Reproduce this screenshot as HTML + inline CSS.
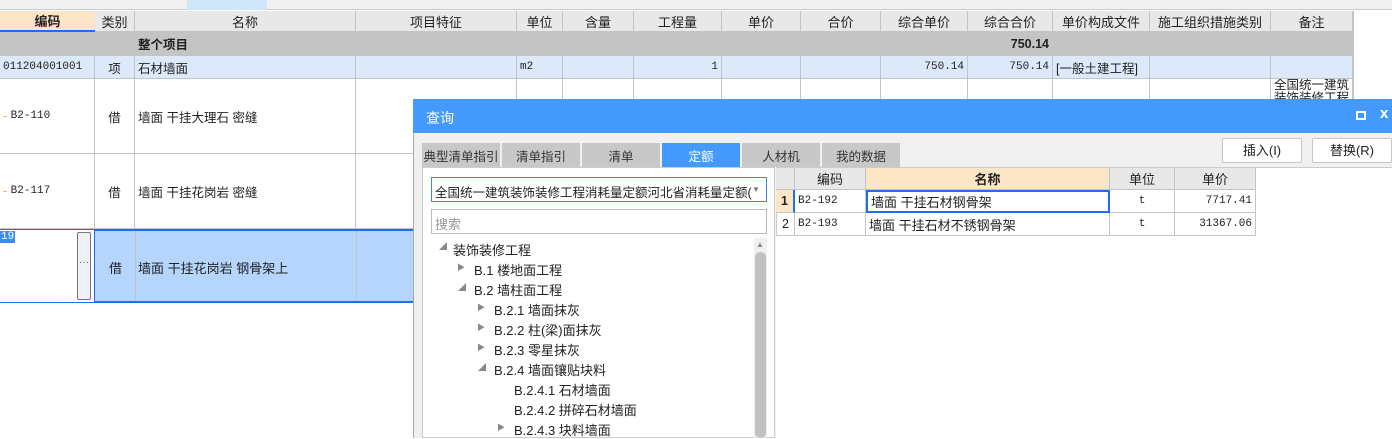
<!DOCTYPE html>
<html><head><meta charset="utf-8"><style>
*{box-sizing:border-box;margin:0;padding:0}
body{width:1392px;height:438px;overflow:hidden;background:#fff;position:relative;font-family:"Liberation Sans","Noto Sans CJK SC",sans-serif;font-size:12.5px;color:#222}
.a{position:absolute}
.c{position:absolute;border-right:1px solid #c4c4c4;border-bottom:1px solid #c4c4c4;display:flex;align-items:center;padding:0 3px;white-space:nowrap;overflow:hidden}
.h{background:#e8e8e8;justify-content:center;font-size:13px}
.g{background:#c4c4c4;font-weight:bold}
.l{background:#dce9fb}
.m{font-family:"Liberation Mono","Noto Sans CJK SC",monospace;font-size:11px}
.r{justify-content:flex-end}.ce{justify-content:center}
.tab{position:absolute;top:143px;height:24px;width:78px;background:#c8c8c8;display:flex;align-items:center;justify-content:center;font-size:12.5px;color:#333;white-space:nowrap;overflow:hidden}
.tr{position:absolute;font-size:12px;color:#222}
</style></head><body>
<div class="a" style="left:0;top:0;width:1392px;height:10px;background:#f0f0f0;border-bottom:1px solid #ccc"></div>
<div class="a" style="left:187px;top:0;width:80px;height:10px;background:#cfe6fb"></div>
<div id="grid"></div>
<script>
var cols=[0,95,135,356,517,563,634,722,801,881,968,1053,1150,1271,1353];
var rows=[11,32,56,79,154,229,303];
var hdr=["编码","类别","名称","项目特征","单位","含量","工程量","单价","合价","综合单价","综合合价","单价构成文件","施工组织措施类别","备注"];
var h='';
function cell(ci,ri,cls,txt){var x=cols[ci],w=cols[ci+1]-x,y=rows[ri],hh=rows[ri+1]-y;h+='<div class="c '+cls+'" style="left:'+x+'px;top:'+y+'px;width:'+w+'px;height:'+hh+'px">'+txt+'</div>';}
for(var i=0;i<14;i++)cell(i,0,'h',hdr[i]);
for(i=0;i<14;i++)cell(i,1,'g',i==2?'整个项目':(i==10?'<span style="margin-left:auto">750.14</span>':''));
var r2=['<span class="m">011204001001</span>','项','石材墙面','','<span class="m">m2</span>','','<span class="m" style="margin-left:auto">1</span>','','','<span class="m" style="margin-left:auto">750.14</span>','<span class="m" style="margin-left:auto">750.14</span>','[一般土建工程]','',''];
for(i=0;i<14;i++)cell(i,2,'l'+(i==1?' ce':''),r2[i]);
var d=[['B2-110','墙面 干挂大理石 密缝'],['B2-117','墙面 干挂花岗岩 密缝']];
for(var k=0;k<2;k++)for(i=0;i<14;i++){var t='';if(i==0)t='<span style="color:#f0b040">-</span>&nbsp;<span class="m">'+d[k][0]+'</span>';if(i==1)t='借';if(i==2)t=d[k][1];if(i==13&&k==0)t='<span style="white-space:normal;align-self:flex-start;line-height:13px">全国统一建筑装饰装修工程</span>';cell(i,3+k,i==1?'ce':'',t);}
for(i=0;i<14;i++){var t='';if(i==1)t='借';if(i==2)t='墙面 干挂花岗岩 钢骨架上';cell(i,5,i==0?'':'ce',t);}
document.getElementById('grid').innerHTML=h;
</script>
<div class="a" style="left:95px;top:229px;width:1297px;height:74px;background:#b5d5fd;border-top:2px solid #1e6ff0;border-bottom:2px solid #1e6ff0"></div>
<div class="a" style="left:135px;top:231px;width:1px;height:70px;background:#c4c4c4"></div>
<div class="a" style="left:356px;top:231px;width:1px;height:70px;background:#c4c4c4"></div>
<div class="a" style="left:109px;top:258px;font-size:13px">借</div>
<div class="a" style="left:138px;top:258px;font-size:13px">墙面 干挂花岗岩 钢骨架上</div>
<div class="a" style="left:0;top:229px;width:95px;height:74px;background:#fff;border:1px solid #1e6ff0;border-left:none"></div>
<div class="a m" style="left:0;top:231px;background:#3d8af5;color:#fff;padding:0 1px">19</div>
<div class="a" style="left:77px;top:232px;width:14px;height:68px;background:#eef1f8;border:1px solid #777;border-radius:2px;font-size:10px;text-align:center;line-height:60px;color:#555">···</div>
<div class="a" style="left:0;top:11px;width:95px;height:21px;background:#fde6c6;border-bottom:2px solid #1e6ff0;display:flex;align-items:center;justify-content:center;font-weight:bold;font-size:13px">编码</div>
<div class="a" style="left:1353px;top:11px;width:1px;height:427px;background:#c4c4c4"></div>

<div class="a" style="left:413px;top:99px;width:979px;height:339px;background:#f0f0f0;border-left:1px solid #aaa"></div>
<div class="a" style="left:413px;top:99px;width:979px;height:34px;background:#4499fd;color:#fff;font-size:14px;padding:9px 0 0 13px">查询</div>
<div class="a" style="left:1356px;top:111px;width:10px;height:9px;border:2px solid #fff"></div>
<div class="a" style="left:1380px;top:105px;color:#fff;font-size:15px;font-weight:bold">x</div>
<div class="tab" style="left:422px">典型清单指引</div>
<div class="tab" style="left:502px">清单指引</div>
<div class="tab" style="left:582px">清单</div>
<div class="tab" style="left:662px;background:#4499fd;color:#fff">定额</div>
<div class="tab" style="left:742px">人材机</div>
<div class="tab" style="left:822px">我的数据</div>
<div class="a" style="left:1222px;top:138px;width:80px;height:25px;background:#fff;border:1px solid #c8c8c8;border-radius:2px;font-size:13px;text-align:center;line-height:23px">插入(I)</div>
<div class="a" style="left:1312px;top:138px;width:80px;height:25px;background:#fff;border:1px solid #c8c8c8;border-radius:2px;font-size:13px;text-align:center;line-height:23px">替换(R)</div>
<div class="a" style="left:422px;top:167px;width:353px;height:271px;background:#fff;border:1px solid #ccc"></div>
<div class="a" style="left:431px;top:177px;width:336px;height:25px;background:#fff;border:1px solid #3d8af5;font-size:12.5px;padding:4px 0 0 3px;white-space:nowrap;overflow:hidden">全国统一建筑装饰装修工程消耗量定额河北省消耗量定额(20</div>
<div class="a" style="left:752px;top:179px;width:14px;height:21px;background:#fff;color:#777;font-size:8px;padding-top:6px">▼</div>
<div class="a" style="left:431px;top:209px;width:336px;height:25px;background:#fff;border:1px solid #bbb;font-size:13px;color:#999;padding:4px 0 0 3px">搜索</div>
<div class="a" style="left:754px;top:238px;width:13px;height:200px;background:#f0f0f0"></div>
<div class="a" style="left:755px;top:252px;width:11px;height:186px;background:#c2c2c2;border-radius:5px"></div>
<div class="a" style="left:756px;top:240px;color:#888;font-size:8px">▲</div>
<div class="tr" style="left:439px;top:241px;color:#888;font-size:8px">◢</div><div class="tr" style="left:453px;top:240px;font-size:13px">装饰装修工程</div>
<div class="tr" style="left:457px;top:262px;color:#888;font-size:8px">▶</div><div class="tr" style="left:474px;top:260px;font-size:13px">B.1 楼地面工程</div>
<div class="tr" style="left:458px;top:282px;color:#888;font-size:8px">◢</div><div class="tr" style="left:474px;top:280px;font-size:13px">B.2 墙柱面工程</div>
<div class="tr" style="left:477px;top:302px;color:#888;font-size:8px">▶</div><div class="tr" style="left:494px;top:300px;font-size:13px">B.2.1 墙面抹灰</div>
<div class="tr" style="left:477px;top:322px;color:#888;font-size:8px">▶</div><div class="tr" style="left:494px;top:320px;font-size:13px">B.2.2 柱(梁)面抹灰</div>
<div class="tr" style="left:477px;top:342px;color:#888;font-size:8px">▶</div><div class="tr" style="left:494px;top:340px;font-size:13px">B.2.3 零星抹灰</div>
<div class="tr" style="left:478px;top:362px;color:#888;font-size:8px">◢</div><div class="tr" style="left:494px;top:360px;font-size:13px">B.2.4 墙面镶贴块料</div>
<div class="tr" style="left:514px;top:380px;font-size:13px">B.2.4.1 石材墙面</div>
<div class="tr" style="left:514px;top:400px;font-size:13px">B.2.4.2 拼碎石材墙面</div>
<div class="tr" style="left:497px;top:422px;color:#888;font-size:8px">▶</div><div class="tr" style="left:514px;top:420px;font-size:13px">B.2.4.3 块料墙面</div>
<div class="a" style="left:776px;top:167px;width:616px;height:271px;background:#fff;border-top:1px solid #ccc"></div>
<div class="c h" style="left:776px;top:168px;width:19px;height:22px"></div>
<div class="c h" style="left:795px;top:168px;width:71px;height:22px">编码</div>
<div class="c h" style="left:866px;top:168px;width:244px;height:22px;background:#fde6c6;font-weight:bold">名称</div>
<div class="c h" style="left:1110px;top:168px;width:65px;height:22px">单位</div>
<div class="c h" style="left:1175px;top:168px;width:81px;height:22px">单价</div>
<div class="c ce" style="left:776px;top:190px;width:19px;height:23px;background:#fde6c6;font-weight:bold;border-right:2px solid #1e6ff0">1</div>
<div class="c m" style="left:795px;top:190px;width:71px;height:23px">B2-192</div>
<div class="c" style="left:866px;top:190px;width:244px;height:23px;border:2px solid #1e6ff0;font-size:13px">墙面 干挂石材钢骨架</div>
<div class="c ce m" style="left:1110px;top:190px;width:65px;height:23px">t</div>
<div class="c r m" style="left:1175px;top:190px;width:81px;height:23px">7717.41</div>
<div class="c ce" style="left:776px;top:213px;width:19px;height:23px;border-left:1px solid #ccc">2</div>
<div class="c m" style="left:795px;top:213px;width:71px;height:23px">B2-193</div>
<div class="c" style="left:866px;top:213px;width:244px;height:23px;font-size:13px">墙面 干挂石材不锈钢骨架</div>
<div class="c ce m" style="left:1110px;top:213px;width:65px;height:23px">t</div>
<div class="c r m" style="left:1175px;top:213px;width:81px;height:23px">31367.06</div>
</body></html>
